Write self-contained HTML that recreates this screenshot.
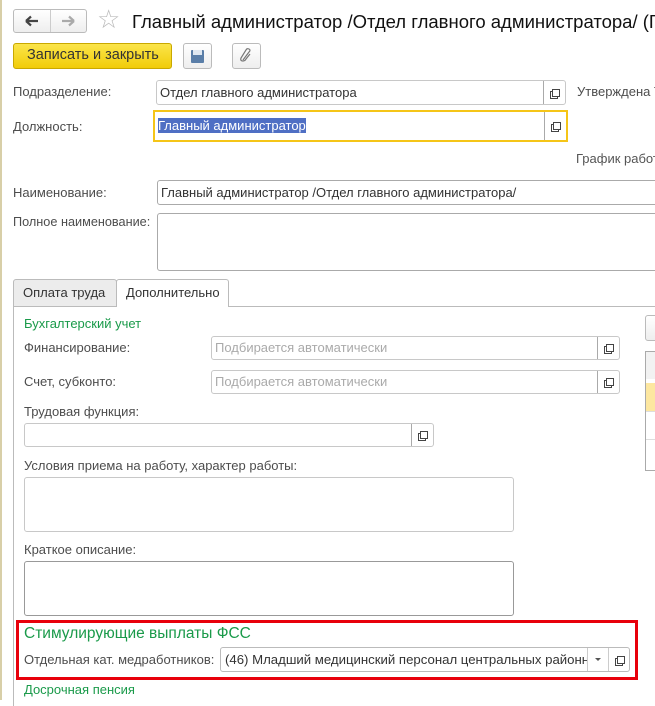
<!DOCTYPE html>
<html><head><meta charset="utf-8"><style>
*{box-sizing:border-box;margin:0;padding:0}
body{width:655px;height:700px;overflow:hidden;background:#fff;font-family:"Liberation Sans",sans-serif;font-size:13px;color:#4d4d4d;position:relative}
.a{position:absolute;white-space:nowrap}
.f{position:absolute;border:1px solid #c8c8c8;border-radius:3px;background:#fff}
.f .b{position:absolute;right:0;top:0;bottom:0;width:22px;border-left:1px solid #aaa}
.f .b::after{content:"";position:absolute;left:8px;top:50%;margin-top:-4px;width:6px;height:6px;border:1px solid #444;box-shadow:-2px 2px 0 -1px #fff,-2px 2px 0 0 #444}
.t{position:absolute;line-height:15px;white-space:nowrap}
.g{color:#1a9a4a}
.ph{color:#aaa}
</style></head><body>
<div class="a" style="left:0;top:0;width:2px;height:700px;background:#d8cfa8"></div>
<div class="a" style="left:13px;top:9px;width:74px;height:24px;border:1px solid #bbb;border-radius:3px;background:linear-gradient(#fff,#eee)"></div>
<div class="a" style="left:50px;top:10px;width:1px;height:22px;background:#ccc"></div>
<svg class="a" style="left:25px;top:15px" width="14" height="12" viewBox="0 0 14 12"><path d="M1 6 H13 M1 6 L6 1.5 M1 6 L6 10.5" stroke="#444" stroke-width="2.2" fill="none"/></svg>
<svg class="a" style="left:61px;top:15px" width="14" height="12" viewBox="0 0 14 12"><path d="M1 6 H13 M13 6 L8 1.5 M13 6 L8 10.5" stroke="#aaa" stroke-width="2.2" fill="none"/></svg>
<div class="a" style="left:97px;top:4px;font-size:26px;color:#bbb">☆</div>
<div class="a" style="left:132px;top:11px;font-size:18.5px;color:#111">Главный администратор /Отдел главного администратора/ (Г</div>
<div class="a" style="left:13px;top:43px;width:159px;height:26px;border:1px solid #c9a800;border-radius:3px;background:linear-gradient(#fbe54a,#f1cc09)"></div>
<div class="t" style="left:27px;top:48px;color:#333;font-size:14.5px">Записать и закрыть</div>
<div class="a" style="left:183px;top:43px;width:29px;height:26px;border:1px solid #bbb;border-radius:3px;background:linear-gradient(#fff,#eee)"></div>
<div class="a" style="left:191px;top:50px;width:13px;height:13px;background:#5a7ea8;border-radius:1px"></div>
<div class="a" style="left:193px;top:50px;width:9px;height:5px;background:#dfe7f0"></div>
<div class="a" style="left:232px;top:43px;width:29px;height:26px;border:1px solid #bbb;border-radius:3px;background:linear-gradient(#fff,#eee)"></div>
<svg class="a" style="left:239px;top:48px" width="14" height="16" viewBox="0 0 14 16"><path d="M4 12 L10 4 Q12 2 10 1 Q8 0 7 2 L2 10 Q1 13 4 13 Q6 13 7 11 L11 6" fill="none" stroke="#777" stroke-width="1.2"/></svg>
<div class="t" style="left:13px;top:84px">Подразделение:</div>
<div class="f" style="left:156px;top:80px;width:410px;height:25px"><span class="t" style="left:3px;top:4px;color:#333">Отдел главного администратора</span><div class="b"></div></div>
<div class="t" style="left:577px;top:84px">Утверждена Т</div>
<div class="t" style="left:13px;top:119px">Должность:</div>
<div class="a" style="left:153px;top:110px;width:415px;height:32px;border:2px solid #f5c518"></div>
<div class="f" style="left:155px;top:112px;width:411px;height:28px;border:none"><span class="t" style="left:3px;top:6px;background:#4f6fc4;color:#fff">Главный администратор</span><div class="b"></div></div>
<div class="t" style="left:576px;top:151px;color:#555">График работ</div>
<div class="t" style="left:13px;top:185px">Наименование:</div>
<div class="f" style="left:157px;top:180px;width:510px;height:25px;border-color:#aaa"><span class="t" style="left:3px;top:4px;color:#333">Главный администратор /Отдел главного администратора/</span></div>
<div class="t" style="left:13px;top:215px;font-size:12.7px">Полное наименование:</div>
<div class="f" style="left:157px;top:213px;width:510px;height:58px;border-color:#aaa"></div>
<div class="a" style="left:13px;top:306px;width:650px;height:1px;background:#bbb"></div>
<div class="a" style="left:13px;top:306px;width:1px;height:400px;background:#bbb"></div>
<div class="a" style="left:13px;top:279px;width:104px;height:28px;border:1px solid #bbb;border-radius:3px 3px 0 0;background:#ececec"></div>
<div class="t" style="left:23px;top:285px;color:#333;font-size:13px">Оплата труда</div>
<div class="a" style="left:116px;top:279px;width:113px;height:28px;border:1px solid #bbb;border-bottom:none;border-radius:3px 3px 0 0;background:#fff"></div>
<div class="t" style="left:126px;top:285px;color:#333;font-size:13px">Дополнительно</div>
<div class="t g" style="left:24px;top:316px">Бухгалтерский учет</div>
<div class="t" style="left:24px;top:340px">Финансирование:</div>
<div class="f" style="left:211px;top:336px;width:409px;height:24px"><span class="t ph" style="left:3px;top:3px">Подбирается автоматически</span><div class="b"></div></div>
<div class="t" style="left:24px;top:374px">Счет, субконто:</div>
<div class="f" style="left:211px;top:370px;width:409px;height:24px"><span class="t ph" style="left:3px;top:3px">Подбирается автоматически</span><div class="b"></div></div>
<div class="t" style="left:24px;top:404px">Трудовая функция:</div>
<div class="f" style="left:24px;top:423px;width:410px;height:24px"><div class="b"></div></div>
<div class="t" style="left:24px;top:458px">Условия приема на работу, характер работы:</div>
<div class="f" style="left:24px;top:477px;width:490px;height:55px"></div>
<div class="t" style="left:24px;top:542px">Краткое описание:</div>
<div class="f" style="left:24px;top:561px;width:490px;height:55px;border-color:#999"></div>
<div class="a" style="left:16px;top:620px;width:622px;height:60px;border:3px solid #e8000b"></div>
<div class="t g" style="left:24px;top:625px;font-size:15.5px;line-height:18px">Стимулирующие выплаты ФСС</div>
<div class="t" style="left:24px;top:652px">Отдельная кат. медработников:</div>
<div class="f" style="left:220px;top:647px;width:410px;height:25px;border-color:#bbb;overflow:hidden"><span class="t" style="left:4px;top:4px;color:#333;font-size:13.2px">(46) Младший медицинский персонал центральных районн</span>
<div class="a" style="right:20px;top:0;bottom:0;width:22px;border-left:1px solid #ccc;border-right:1px solid #ccc;background:#fff"></div>
<span class="a" style="left:374px;top:10px;border-left:3px solid transparent;border-right:3px solid transparent;border-top:3px solid #555"></span><div class="b" style="border-left:none;width:20px"></div></div>
<div class="t g" style="left:24px;top:682px">Досрочная пенсия</div>
<div class="a" style="left:645px;top:315px;width:20px;height:26px;border:1px solid #bbb;border-radius:3px;background:linear-gradient(#fff,#eee)"></div>
<div class="a" style="left:645px;top:351px;width:20px;height:120px;border:1px solid #aaa;border-right:none"></div>
<div class="a" style="left:646px;top:352px;width:10px;height:27px;background:#f2f2f2"></div>
<div class="a" style="left:646px;top:383px;width:10px;height:28px;background:#fde7a0"></div>
<div class="a" style="left:646px;top:411px;width:10px;height:1px;background:#ddd"></div>
<div class="a" style="left:646px;top:439px;width:10px;height:1px;background:#ddd"></div>
</body></html>
